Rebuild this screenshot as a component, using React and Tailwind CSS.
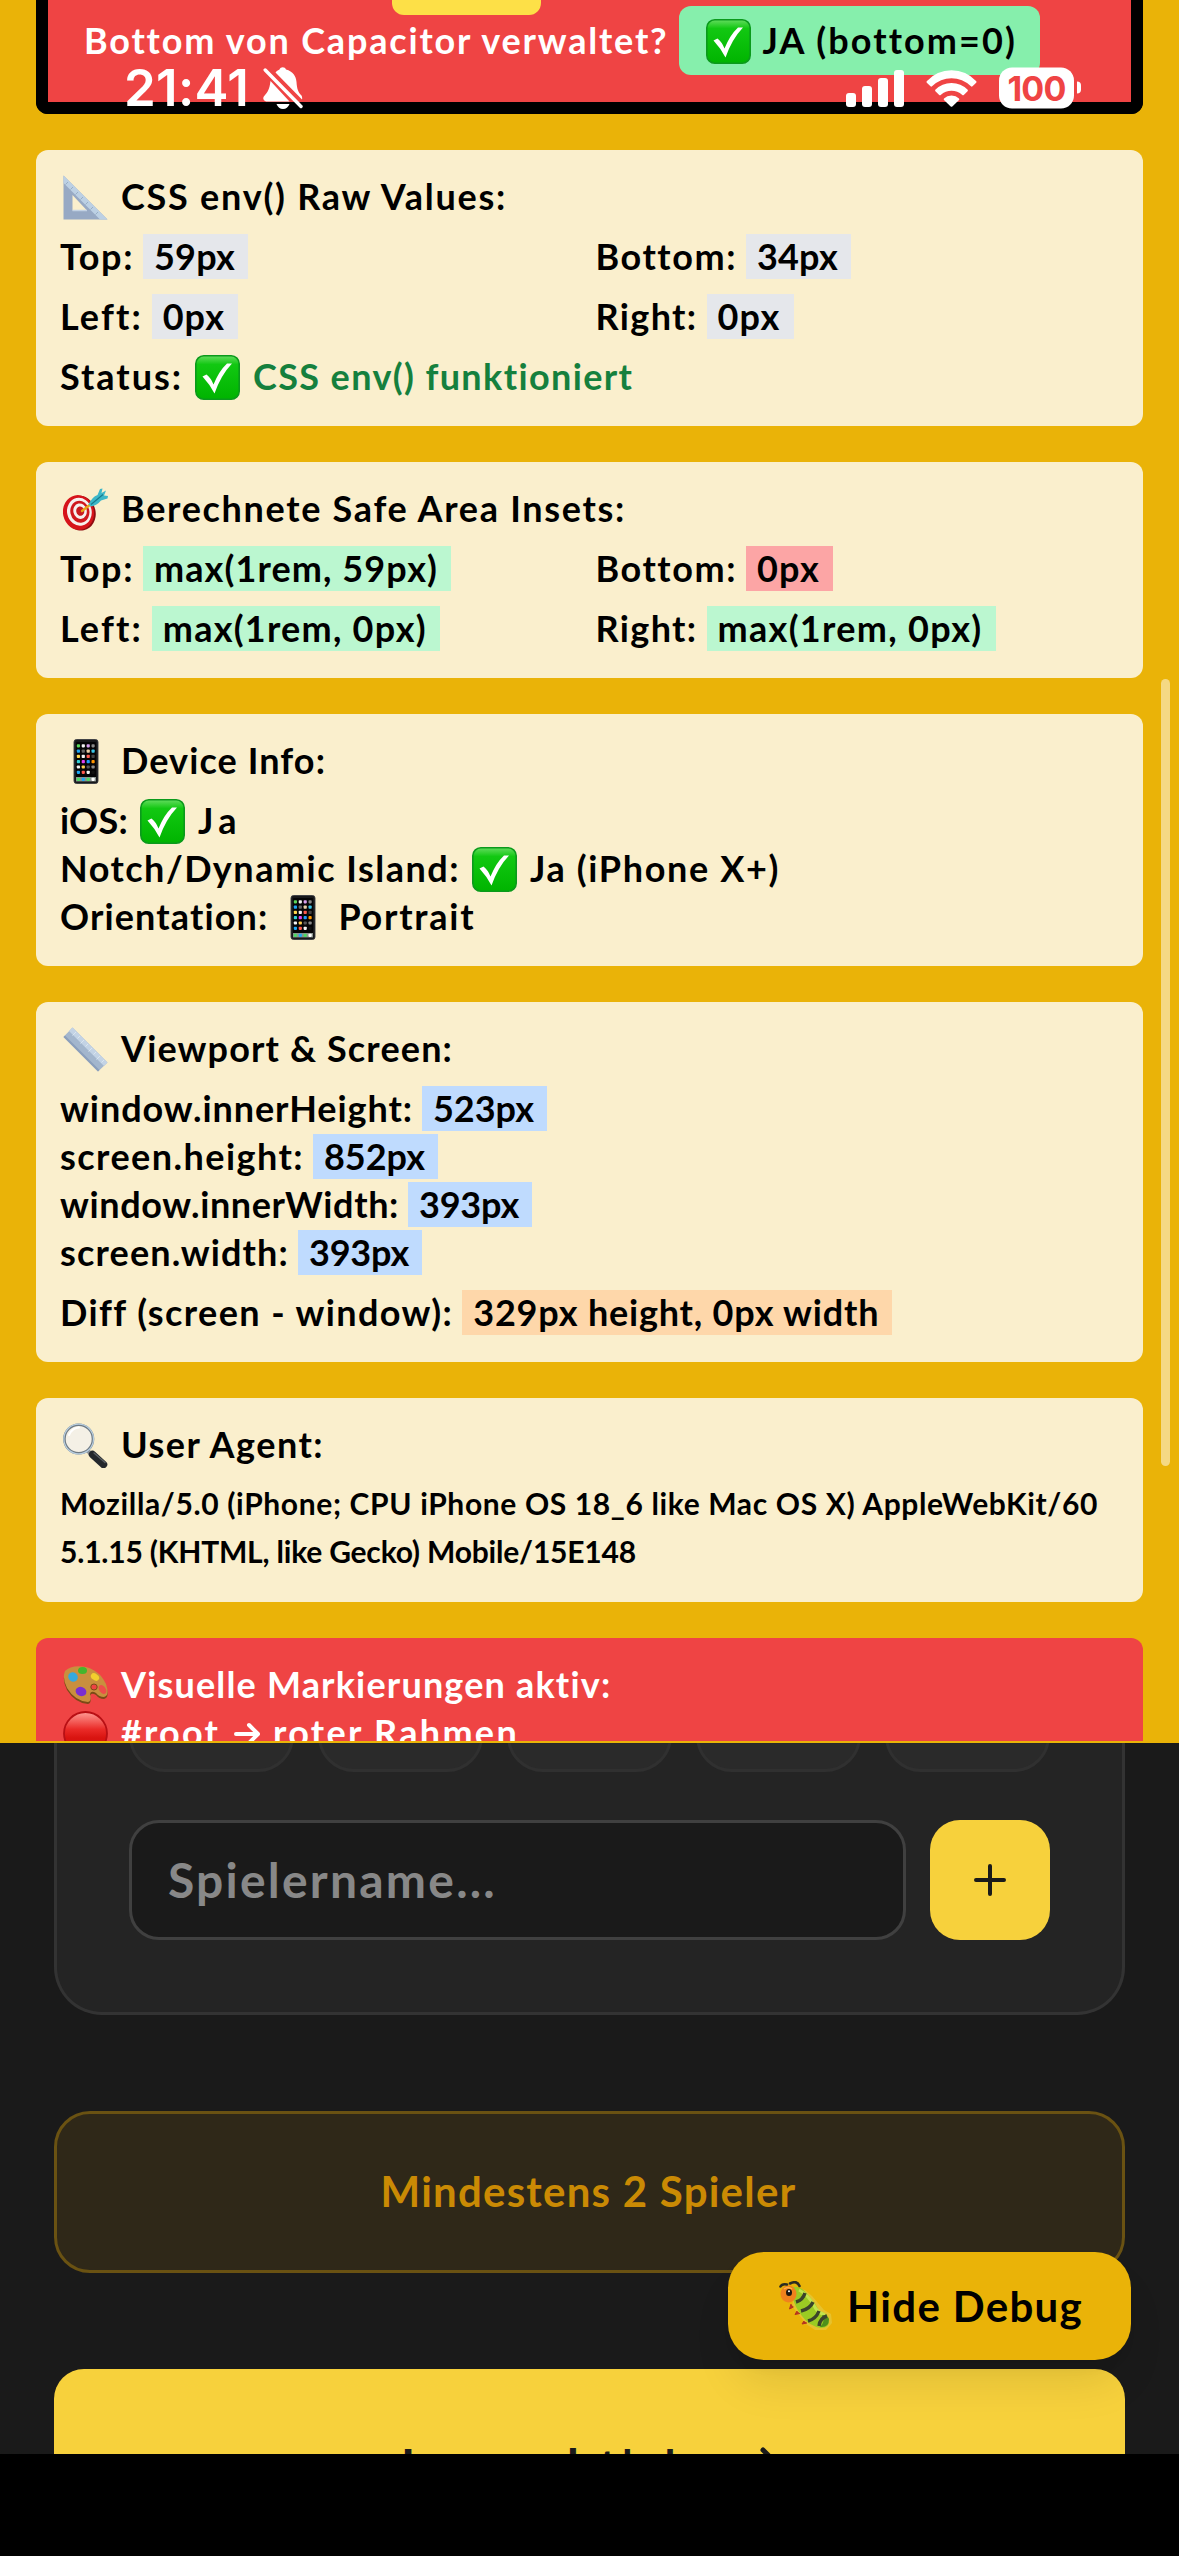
import React, { useLayoutEffect, useRef, useState } from "react";

/* Text whose letter spacing is spread so that the run takes exactly `w` pixels. */
function T({ w, className = "", children }) {
  const ref = useRef(null);
  const [spacing, setSpacing] = useState(0);
  useLayoutEffect(() => {
    const natural = ref.current.getBoundingClientRect().width;
    setSpacing((w - natural) / String(children).length);
  }, [w, children]);
  return (
    <span ref={ref} className={"inline-block shrink-0 whitespace-pre " + className} style={{ letterSpacing: spacing + "px" }}>
      {children}
    </span>
  );
}

/* ---------- emoji ---------- */

function Emoji({ children }) {
  return (
    <svg viewBox="0 0 45 45" className="mt-px mr-[13px] ml-[3px] h-[45px] w-[45px] shrink-0">
      {children}
    </svg>
  );
}

function Check() {
  return (
    <Emoji>
      <defs>
        <linearGradient id="chk" x1="0" y1="0" x2="0" y2="1">
          <stop offset="0" stopColor="#63dc5e" />
          <stop offset="0.2" stopColor="#12c812" />
          <stop offset="1" stopColor="#00b400" />
        </linearGradient>
      </defs>
      <rect x="0.8" y="0.8" width="43.4" height="43.4" rx="8" fill="url(#chk)" stroke="#0b9a1c" strokeWidth="1.6" />
      <path d="M7.5 21.5 L11.5 19.5 Q16 23 18.5 29.5 Q24 16 32 8.5 L37 8.5 Q26 20 19.5 38.5 Q14.500 29 7.500 21.500Z" fill="#fff" />
    </Emoji>
  );
}

function SetSquare() {
  return (
    <Emoji>
      <path fillRule="evenodd" d="M0.500 0.500 L44.500 44.500 H0.500Z M9.500 20 V35.500 H24Z" fill="#97a9c4" />
      <path d="M0.500 0.500 L44.500 44.500 H37 L0.500 8Z" fill="#bcd0e4" />
      <path d="M5 7l-2.500 2.500M10 12l-2.500 2.500M15 17l-2.500 2.500M20 22l-2.500 2.500M25 27l-2.500 2.500M30 32l-2.500 2.500M35 37l-2.500 2.500" stroke="#8fa5bd" strokeWidth="0.8" />
      <path d="M9.500 35.500H24" stroke="#c3d2e4" strokeWidth="1.500" />
    </Emoji>
  );
}

function Target() {
  return (
    <Emoji>
      <g transform="rotate(-12 15.500 25.500)">
        <ellipse cx="17" cy="26.500" rx="15.500" ry="17.500" fill="#8e0d12" />
        <ellipse cx="15.500" cy="25.500" rx="15.500" ry="17.500" fill="#d6141b" />
        <ellipse cx="16.500" cy="25" rx="12.300" ry="14" fill="#f6f0ee" />
        <ellipse cx="17" cy="25" rx="9.500" ry="11" fill="#cf171d" />
        <ellipse cx="17.300" cy="24.500" rx="6.700" ry="7.800" fill="#f6f0ee" />
        <ellipse cx="17.500" cy="24.500" rx="4" ry="4.700" fill="#c91a20" />
      </g>
      <path d="M19 24 L28 17" stroke="#e8a417" strokeWidth="2.400" strokeLinecap="round" />
      <path d="M25.500 17.500 Q29 10 34.500 8 L37 2 L39.500 1.500 L38.500 6 L43 3.500 L41 8.500 L45 9 L44.500 11.500 L38 13.500 Q34 18.500 28 19.500Z" fill="#3cb7c8" />
      <path d="M28 17.500 L40 7.500" stroke="#17788c" strokeWidth="1.100" />
    </Emoji>
  );
}

const APP_DOTS = [
  ["#5bd75b", "#f4f4f4", "#d8a0f0", "#8a8a8a"],
  ["#1ea7f5", "#666", "#e8cfa8", "#39c6e8"],
  ["#ffd84d", "#f4f4f4", "#ff5a4d", "#444"],
  ["#33d0d8", "#e040f0", "#1e9cff", "#ff9500"],
  ["#f4f4f4", "#ffcf4d", "#555", "#8a8a8a"],
  ["#1ea7f5", "#ff5a4d", "#f4f4f4", "#111"],
];

function Phone() {
  return (
    <Emoji>
      <rect x="11" y="0.500" width="24" height="44" rx="2.500" fill="#17181b" stroke="#3a3d42" strokeWidth="0.900" />
      <rect x="13" y="3" width="20" height="40" rx="1" fill="#050507" />
      {APP_DOTS.map((row, r) =>
        row.map((c, i) => <rect key={r + "-" + i} x={13.800 + i * 4.900} y={5.200 + r * 5.300} width="3.200" height="3.200" rx="0.800" fill={c} />)
      )}
      <rect x="13" y="38" width="20" height="4.500" fill="#8a9490" />
      {["#4cd964", "#1ea7f5", "#4cd964", "#fff"].map((c, i) => (
        <rect key={i} x={13.800 + i * 4.900} y="38.700" width="3.200" height="3.200" rx="0.800" fill={c} />
      ))}
    </Emoji>
  );
}

function Ruler() {
  return (
    <Emoji>
      <path d="M9.500 0.500 L44.500 35.500 L35 44.500 L0.500 10Z" fill="#a3b6cd" />
      <path d="M9.500 0.500 L44.500 35.500 L41 39 L6 4Z" fill="#c3d3e5" />
      <path d="M0.500 10 L35 44.500 L36.500 43 L2 8.500Z" fill="#8b9fbb" />
      <path d="M13 5l-3.500 3.500M17 9l-2.500 2.500M21 13l-3.500 3.500M25 17l-2.500 2.500M29 21l-3.500 3.500M33 25l-2.500 2.500M37 29l-3.500 3.500M41 33l-2.500 2.500" stroke="#dbe6f1" strokeWidth="0.900" />
    </Emoji>
  );
}

function Magnifier() {
  return (
    <Emoji>
      <path d="M24 27 L30 33" stroke="#8c9399" strokeWidth="4" />
      <path d="M29.500 31.500 L40.500 41.500" stroke="#24282c" strokeWidth="7.500" strokeLinecap="round" />
      <path d="M31 30 L42 39.500" stroke="#5c6166" strokeWidth="1.300" strokeLinecap="round" />
      <circle cx="15.700" cy="16" r="14.300" fill="#f4f0e6" stroke="#6f7b85" strokeWidth="2.600" />
      <circle cx="15.700" cy="16" r="14.800" fill="none" stroke="#b9cfe0" strokeWidth="1.200" />
      <path d="M6 12 Q9 5 16 4.500" stroke="#fff" strokeWidth="2" fill="none" strokeLinecap="round" />
    </Emoji>
  );
}

function Palette() {
  return (
    <Emoji>
      <path d="M2 10 Q8 3 20 5 Q36 8 43 23 Q47 35 41 36 Q36 36 33 32 Q28 29 27 33 Q29 40 25 41 Q12 40 4 27 Q-1 17 2 10Z" fill="#7b4a16" />
      <path d="M2 8 Q8 2 20 3.500 Q36 6 43 21 Q47 33 41 34 Q36 34 33 30 Q28 27 27 31 Q29 38 25 39 Q12 38 4 25 Q-1 15 2 8Z" fill="#c98f3e" />
      <ellipse cx="31" cy="24" rx="3.200" ry="3" fill="#ee4343" stroke="#7b4a16" strokeWidth="1" />
      <ellipse cx="10" cy="14" rx="5" ry="4.500" transform="rotate(40 10 14)" fill="#35a9dd" />
      <ellipse cx="19.500" cy="7.500" rx="4.500" ry="3.600" fill="#43b62d" />
      <ellipse cx="32" cy="14" rx="4.500" ry="3.200" transform="rotate(35 32 14)" fill="#f2cf2d" />
      <ellipse cx="39.500" cy="26.500" rx="3.200" ry="5" transform="rotate(-35 39.500 26.500)" fill="#ee4d4a" />
      <ellipse cx="18" cy="28.500" rx="5.500" ry="4.500" transform="rotate(20 18 28.500)" fill="#7a2fd0" />
    </Emoji>
  );
}

function RedCircle() {
  return (
    <Emoji>
      <defs>
        <linearGradient id="redc" x1="0" y1="0" x2="0" y2="1">
          <stop offset="0" stopColor="#ff9b95" />
          <stop offset="0.400" stopColor="#ea2b28" />
          <stop offset="0.600" stopColor="#d91410" />
          <stop offset="1" stopColor="#d01010" />
        </linearGradient>
      </defs>
      <circle cx="22.500" cy="22.500" r="21.500" fill="url(#redc)" stroke="#b80f14" strokeWidth="1.800" />
    </Emoji>
  );
}

function Bug() {
  return (
    <svg viewBox="0 0 54 50" className="mr-[14px] h-[50px] w-[54px] shrink-0">
      <path d="M16 7 L26 9 L33 15 L39 22 L45 29 L52 33 L53 42 L47 49 L36 49 L27 43 L20 34 L13 25Z" fill="#e3d45c" opacity="0.450" />
      <path d="M12 23 l-1.500 5 l4 -2 M18 30 l-2 3.500 l5 -1 M25 40 l-2 3 l5 -1" fill="#b5341f" stroke="#b5341f" strokeWidth="1" />
      <path d="M13 14 Q15 25 23 35 Q30 45 42 47 Q51 47 50 38 Q49 32 41 31 Q36 22 30 15 Q22 4 13 6Z" fill="#9bcb23" />
      <path d="M20 9 Q30 14 37 28 Q40 32 46 34" fill="none" stroke="#c3e34d" strokeWidth="3" />
      <path d="M41 46 Q50 47 50 38 Q48 34 43 34 Q47 40 41 46Z" fill="#4f8f1b" />
      <path d="M17 21 Q24 19 26 12 M22 30 Q31 28 34 21 M29 40 Q37 38 40 30 M40 45 Q41 37 48 35" stroke="#3b432b" strokeWidth="3.400" fill="none" />
      <ellipse cx="9.500" cy="13" rx="8" ry="8.500" fill="#f0821d" />
      <path d="M5 8 Q9 5 13 8" stroke="#fbb34a" strokeWidth="1.500" fill="none" />
      <ellipse cx="10" cy="11.500" rx="3" ry="3.500" fill="#1e1710" />
      <circle cx="10" cy="10.300" r="1" fill="#fff" />
      <path d="M1.500 5.500 Q3 2.500 8 3.500 M11 2.500 Q18 -1 20.500 5" stroke="#2c2c22" strokeWidth="2.600" fill="none" strokeLinecap="round" />
    </svg>
  );
}

/* ---------- panel pieces ---------- */

function Row({ className = "", children }) {
  return <div className={"flex h-12 items-start leading-[44px] " + className}>{children}</div>;
}

function Label({ w, children }) {
  return <T w={w - 1} className="mr-[9px]">{children}</T>;
}

function Value({ w, tone, children }) {
  return (
    <span className={"flex h-[45px] shrink-0 pr-[13px] pl-[11px] " + tone}>
      <T w={w}>{children}</T>
    </span>
  );
}

function Card({ children }) {
  return <section className="rounded-xl bg-[#faefcd] p-6 text-black">{children}</section>;
}

function StatusBar() {
  return (
    <div className="absolute top-[62px] left-0 z-20 flex h-12 w-full items-center text-white">
      <div className="ml-[124px] flex h-12 w-[124px] items-center font-['Inter'] text-[51px] leading-[52px] font-semibold">
        <T w={125} className="translate-y-[2px]">21:41</T>
      </div>
      <svg viewBox="0 0 40 42" className="ml-[15px] h-[42px] w-10 translate-y-[2px]" fill="#fff">
        <path d="M12.500 5.500 C14 3.500 15.500 3 16.500 2.500 C17.500 -0.500 22 -0.500 23 2.500 C30 4.500 33 9 33.500 15 C34 22 35 25 38.500 28.500 Q39.500 30.500 39 32.500 Z" />
        <path d="M7.500 14 L26.500 34.500 H3 Q-1 33 0.800 29.500 C5 25 6.500 22 7.500 14Z" />
        <path d="M13.500 37 H26.500 Q24.500 42 20 42 Q15.500 42 13.500 37Z" />
        <path d="M2.200 3 L38 39.500" stroke="#fff" strokeWidth="3.400" strokeLinecap="round" />
      </svg>
      <svg viewBox="0 0 58 37" className="ml-[543px] h-[37px] w-[58px] translate-y-[2px]" fill="#fff">
        <rect x="0" y="23" width="10" height="14" rx="3" />
        <rect x="16" y="16" width="10" height="21" rx="3" />
        <rect x="32" y="8" width="10" height="29" rx="3" />
        <rect x="48" y="0" width="10" height="37" rx="3" />
      </svg>
      <svg viewBox="0 0 51 37" className="ml-[22px] h-[37px] w-[51px] translate-y-[2px]" fill="#fff">
        <path d="M0.700 11.200 Q11 0.300 25.500 0.300 Q40 0.300 50.300 11.200 Q50.800 12 50.200 12.700 L46.500 16.300 Q45.700 17 45 16.300 Q36.500 8.300 25.500 8.300 Q14.500 8.300 6 16.300 Q5.300 17 4.500 16.300 L0.800 12.700 Q0.200 12 0.700 11.200Z" />
        <path d="M9.300 19.800 Q16 13 25.500 13 Q35 13 41.700 19.800 Q42.200 20.500 41.600 21.200 L37.800 25 Q37 25.600 36.300 25 Q31.500 20.800 25.500 20.800 Q19.500 20.800 14.700 25 Q14 25.600 13.200 25 L9.400 21.200 Q8.800 20.500 9.300 19.800Z" />
        <path d="M18 28.400 Q21 25.500 25.500 25.500 Q30 25.500 33 28.400 Q33.600 29.200 33 29.900 L26.300 36.400 Q25.500 37 24.700 36.400 L18 29.900 Q17.400 29.200 18 28.400Z" />
      </svg>
      <div className="ml-[22px] flex h-[41px] w-[75px] translate-y-[1.500px] items-center justify-center rounded-[13px] bg-white pt-px font-['Inter'] text-[34px] leading-none font-bold text-[#ef4444]">
        <T w={58}>100</T>
      </div>
      <div className="ml-[3px] h-3 w-1 translate-y-[1.500px] rounded-r-full bg-white" />
    </div>
  );
}

function DebugPanel() {
  const gray = "bg-[#e5e7eb]";
  const green = "bg-[#bbf7d0]";
  const blue = "bg-[#bfdbfe]";
  return (
    <div className="relative flex h-[1743px] shrink-0 flex-col gap-9 overflow-hidden border-b-2 border-[#eab308] bg-[#eab308] px-9 text-[36px] font-bold">
      <section className="flex h-[114px] shrink-0 flex-col justify-end overflow-hidden rounded-b-xl border-x-12 border-b-12 border-black bg-[#ef4444] px-9 pb-[27px] text-white">
        <div className="-mb-[9px] flex h-[69px] shrink-0 items-start pl-[308px]">
          <span className="flex h-[69px] shrink-0 items-start rounded-xl bg-[#fde047] px-6 pt-3 leading-[44px] text-black">
            <T w={101}>523px</T>
          </span>
        </div>
        <div className="flex h-[69px] shrink-0 items-start">
          <T w={583} className="mt-3 mr-[11px] leading-[44px]">Bottom von Capacitor verwaltet?</T>
          <span className="flex h-[69px] w-[361px] shrink-0 items-start rounded-xl bg-[#86efac] px-6 pt-3 leading-[44px] text-black">
            <Check />
            <T w={253} className="-ml-[2px]">JA (bottom=0)</T>
          </span>
        </div>
      </section>

      <Card>
        <Row><SetSquare /><T w={386}>CSS env() Raw Values:</T></Row>
        <div className="mt-3 grid grid-cols-2 gap-3">
          <Row><Label w={75}>Top:</Label><Value w={81} tone={gray}>59px</Value></Row>
          <Row><Label w={141}>Bottom:</Label><Value w={81} tone={gray}>34px</Value></Row>
          <Row><Label w={83}>Left:</Label><Value w={62} tone={gray}>0px</Value></Row>
          <Row><Label w={103}>Right:</Label><Value w={63} tone={gray}>0px</Value></Row>
        </div>
        <Row className="mt-3">
          <Label w={124}>Status:</Label><Check />
          <T w={381} className="text-[#15803d]">CSS env() funktioniert</T>
        </Row>
      </Card>

      <Card>
        <Row><Target /><T w={505}>Berechnete Safe Area Insets:</T></Row>
        <div className="mt-3 grid grid-cols-2 gap-3">
          <Row><Label w={75}>Top:</Label><Value w={284} tone={green}>max(1rem, 59px)</Value></Row>
          <Row><Label w={141}>Bottom:</Label><Value w={63} tone="bg-[#fca5a5]">0px</Value></Row>
          <Row><Label w={83}>Left:</Label><Value w={264} tone={green}>max(1rem, 0px)</Value></Row>
          <Row><Label w={103}>Right:</Label><Value w={265} tone={green}>max(1rem, 0px)</Value></Row>
        </div>
      </Card>

      <Card>
        <Row className="mb-3"><Phone /><T w={205}>Device Info:</T></Row>
        <Row><Label w={69}>iOS:</Label><Check /><T w={44}>Ja</T></Row>
        <Row><Label w={401}>Notch/Dynamic Island:</Label><Check /><T w={250}>Ja (iPhone X+)</T></Row>
        <Row><Label w={210}>Orientation:</Label><Phone /><T w={137}>Portrait</T></Row>
      </Card>

      <Card>
        <Row className="mb-3"><Ruler /><T w={332}>Viewport &amp; Screen:</T></Row>
        <Row><Label w={354}>window.innerHeight:</Label><Value w={101} tone={blue}>523px</Value></Row>
        <Row><Label w={245}>screen.height:</Label><Value w={101} tone={blue}>852px</Value></Row>
        <Row><Label w={340}>window.innerWidth:</Label><Value w={100} tone={blue}>393px</Value></Row>
        <Row><Label w={230}>screen.width:</Label><Value w={100} tone={blue}>393px</Value></Row>
        <Row className="mt-3"><Label w={393}>Diff (screen - window):</Label><Value w={406} tone="bg-[#fed7aa]">329px height, 0px width</Value></Row>
      </Card>

      <Card>
        <Row className="mb-3"><Magnifier /><T w={203}>User Agent:</T></Row>
        <div className="text-[30px] leading-[42px]">
          <div className="h-12"><T w={1038}>Mozilla/5.0 (iPhone; CPU iPhone OS 18_6 like Mac OS X) AppleWebKit/60</T></div>
          <div className="h-12"><T w={576}>5.1.15 (KHTML, like Gecko) Mobile/15E148</T></div>
        </div>
      </Card>

      <section className="shrink-0 rounded-xl bg-[#ef4444] p-6 text-white">
        <Row><Palette /><T w={491}>Visuelle Markierungen aktiv:</T></Row>
        <Row>
          <RedCircle /><T w={99}>#root</T>
          <svg viewBox="0 0 26 24" className="mt-[12px] mr-[13px] ml-[14px] h-6 w-[26px]" fill="none" stroke="#fff" strokeWidth="4" strokeLinecap="round" strokeLinejoin="round">
            <path d="M2 12H23M15 3L24 12L15 21" />
          </svg>
          <T w={246}>roter Rahmen</T>
        </Row>
      </section>

      <div className="absolute top-[679px] right-[9px] h-[787px] w-[9px] rounded-full bg-white/50" />
    </div>
  );
}

function GamePage() {
  return (
    <div className="relative h-[711px] shrink-0 overflow-hidden bg-[#1a1a1a] px-[54px]">
      <section className="h-[272px] rounded-b-[48px] border-x-3 border-b-3 border-[#333] bg-[#242424] px-[72px]">
        <div className="grid grid-cols-5 gap-6">
          {[0, 1, 2, 3, 4].map((i) => (
            <div key={i} className="-mt-15 h-[89px] rounded-[36px] border-3 border-[#303030] bg-[#2a2a2a]" />
          ))}
        </div>
        <div className="mt-12 flex gap-6">
          <div className="flex h-[120px] flex-1 items-center rounded-[30px] border-3 border-[#404040] bg-[#1a1a1a] pl-9 text-[48px] font-bold text-[#888]">
            <T w={329}>Spielername...</T>
          </div>
          <button className="flex h-[120px] w-[120px] items-center justify-center rounded-[30px] bg-[#f7d13c]">
            <svg viewBox="0 0 32 32" className="h-8 w-8" stroke="#1a1a1a" strokeWidth="4" strokeLinecap="round">
              <path d="M16 2V30M2 16H30" />
            </svg>
          </button>
        </div>
      </section>

      <section className="mt-24 flex h-[162px] items-center justify-center rounded-[36px] border-3 border-[#6a5212] bg-[#2f2818] text-[42px] leading-[50px] font-bold text-[#ca8a04]">
        <T w={416} className="-mt-[2px] -ml-[2px]">Mindestens 2 Spieler</T>
      </section>

      <button className="mt-24 flex h-[180px] w-full items-start justify-center rounded-[30px] bg-[#f7d13c] pt-[61px] text-[48px] leading-[72px] font-bold text-[#1a1a1a]">
        <T w={281}>Los geht's!</T>
        <svg viewBox="0 0 36 34" className="mt-[15px] ml-[60px] h-[34px] w-9" fill="none" stroke="#1a1a1a" strokeWidth="5" strokeLinecap="round" strokeLinejoin="round">
          <path d="M3 17H33M21 5L33 17L21 29" />
        </svg>
      </button>

      <button className="absolute top-[509px] right-12 flex h-[108px] w-[403px] items-center rounded-[36px] bg-[#eab308] pl-[51px] text-[42px] leading-[50px] font-bold text-black shadow-[0_30px_45px_-9px_rgba(0,0,0,0.1),0_12px_18px_-12px_rgba(0,0,0,0.1)]">
        <Bug />
        <T w={236}>Hide Debug</T>
      </button>
    </div>
  );
}

export default function App() {
  return (
    <main className="relative flex h-[2556px] w-[1179px] flex-col overflow-hidden bg-black font-['Lato','DejaVu_Sans',sans-serif]">
      <StatusBar />
      <DebugPanel />
      <GamePage />
    </main>
  );
}
